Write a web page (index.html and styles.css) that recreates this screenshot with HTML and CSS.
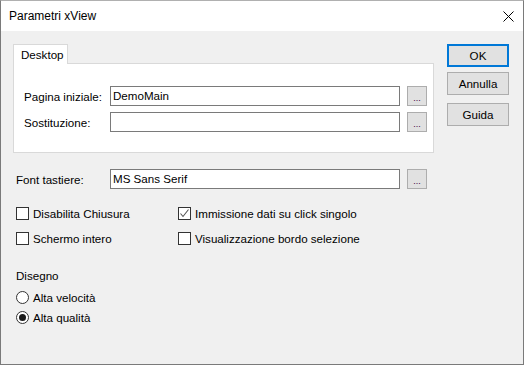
FILE: index.html
```html
<!DOCTYPE html>
<html lang="it">
<head>
  <meta charset="UTF-8" />
  <title>Parametri xView</title>
  <link rel="stylesheet" href="styles.css">
</head>
<body>

<div class="window">
  <div class="title-bar">
    <span class="title">Parametri xView</span>
    <svg class="close" width="11" height="11" viewBox="0 0 11 11">
      <path d="M0.5 0.5 L10.5 10.5 M10.5 0.5 L0.5 10.5" stroke="#000" stroke-width="1" fill="none"/>
    </svg>
  </div>

  <div class="content">
    <div class="main">
      <div class="tabs">
        <div class="tab">Desktop</div>
      </div>
      <div class="panel">
        <div class="field-row">
          <span class="label">Pagina iniziale:</span>
          <div class="input">DemoMain</div>
          <div class="browse">...</div>
        </div>
        <div class="field-row">
          <span class="label">Sostituzione:</span>
          <div class="input"></div>
          <div class="browse">...</div>
        </div>
      </div>

      <div class="field-row font-row">
        <span class="label">Font tastiere:</span>
        <div class="input">MS Sans Serif</div>
        <div class="browse">...</div>
      </div>

      <div class="checks">
        <label class="check"><span class="box"></span>Disabilita Chiusura</label>
        <label class="check"><span class="box checked">
          <svg width="11" height="11" viewBox="0 0 11 11"><path d="M1.5 5.5 L4 8.5 L9.5 1.5" stroke="#555" stroke-width="1.1" fill="none"/></svg>
        </span>Immissione dati su click singolo</label>
        <label class="check"><span class="box"></span>Schermo intero</label>
        <label class="check"><span class="box"></span>Visualizzazione bordo selezione</label>
      </div>

      <div class="group-label">Disegno</div>
      <div class="radios">
        <label class="radio"><span class="dot"></span>Alta velocità</label>
        <label class="radio"><span class="dot on"></span>Alta qualità</label>
      </div>
    </div>

    <div class="side">
      <div class="btn default">OK</div>
      <div class="btn">Annulla</div>
      <div class="btn guida">Guida</div>
    </div>
  </div>
</div>

</body>
</html>
```

FILE: styles.css
```css
* { box-sizing: border-box; }
body {
  margin: 0;
  font-family: 'Liberation Sans', Arial, sans-serif;
  font-size: 11.6px;
  color: #000;
  background: #fff;
}
.window {
  width: 524px;
  height: 365px;
  border: 1px solid #7a7a7a;
  border-top-color: #b0b0b0;
  background: #f0f0f0;
  display: flex;
  flex-direction: column;
}
.title-bar {
  height: 30px;
  background: #fff;
  display: flex;
  align-items: center;
  justify-content: space-between;
  padding: 0 9px 0 8px;
}
.title { font-size: 12px; }
.content {
  flex: 1;
  display: flex;
  padding: 12px 0 0 12px;
}
.main { width: 421px; }
.tabs { display: flex; height: 20px; }
.tab {
  width: 55px;
  background: #fff;
  border: 1px solid #d9d9d9;
  border-bottom: none;
  padding: 3px 0 0 7px;
  position: relative;
  top: 1px;
}
.panel {
  height: 90px;
  background: #fff;
  border: 1px solid #d9d9d9;
  padding: 22px 6px 0 10px;
}
.field-row {
  display: flex;
  align-items: center;
  height: 20px;
  margin-bottom: 6px;
}
.field-row .label { width: 86px; }
.input {
  width: 290px;
  height: 20px;
  background: #fff;
  border: 1px solid #7a7a7a;
  padding: 2px 0 0 2px;
}
.browse {
  width: 20px;
  height: 20px;
  margin-left: 7px;
  background: #e1e1e1;
  border: 1px solid #adadad;
  text-align: center;
  font-size: 9px;
  line-height: 22px;
  color: #400040;
}
.font-row { margin: 16px 0 0 3px; }
.font-row .label { width: 94px; }
.checks {
  display: grid;
  grid-template-columns: 162px 1fr;
  row-gap: 12px;
  margin: 18px 0 0 3px;
}
.check, .radio {
  display: flex;
  align-items: center;
  height: 13px;
  white-space: nowrap;
}
.box {
  width: 13px;
  height: 13px;
  border: 1px solid #333;
  background: #fff;
  margin-right: 4px;
  display: flex;
  align-items: center;
  justify-content: center;
}
.group-label { margin: 24px 0 0 3px; }
.radios {
  display: flex;
  flex-direction: column;
  gap: 7px;
  margin: 9px 0 0 3px;
}
.dot {
  width: 13px;
  height: 13px;
  border: 1px solid #333;
  border-radius: 50%;
  background: #fff;
  margin-right: 4px;
  display: flex;
  align-items: center;
  justify-content: center;
}
.dot.on::after {
  content: "";
  width: 7px;
  height: 7px;
  border-radius: 50%;
  background: #1a1a1a;
}
.side {
  margin-left: 13px;
  padding-top: 1px;
  display: flex;
  flex-direction: column;
}
.btn {
  width: 62px;
  height: 23px;
  background: #e1e1e1;
  border: 1px solid #adadad;
  display: flex;
  align-items: center;
  justify-content: center;
  margin-bottom: 5px;
}
.btn.default { border: 2px solid #0078d7; }
.btn.guida { margin-top: 3px; }
```
